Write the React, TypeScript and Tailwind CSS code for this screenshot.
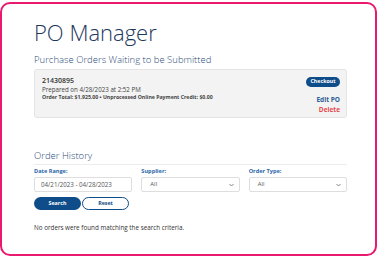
import React from "react";

const Chevron = () => (
  <svg width="5" height="4" viewBox="0 0 10 6" className="shrink-0">
    <path d="M1 1l4 4 4-4" fill="none" stroke="#666" strokeWidth="1.6" />
  </svg>
);

const SelectBox = ({ value }: { value: string }) => (
  <div className="flex h-[15px] w-full items-center justify-between rounded-[2px] border border-[#dedede] bg-white pl-[8px] pr-[5px] text-[6px] text-[#555]">
    <span>{value}</span>
    <Chevron />
  </div>
);

export default function App() {
  return (
    <div
      className="h-[257px] w-[379px] overflow-hidden bg-white"
      style={{ fontFamily: '"Open Sans", "Liberation Sans", sans-serif' }}
    >
      <div className="mt-[2px] h-[254px] w-[377px] rounded-[10px] border-2 border-[#e8196e]">
        <div className="w-[345px] pl-[32px] pt-[15px]">
          <h1 className="text-[22px] font-light leading-[27px] text-[#1c375c]">PO Manager</h1>

          <h2 className="mt-[7px] text-[9.5px] font-light leading-[13px] text-[#2c4c78]">
            Purchase Orders Waiting to be Submitted
          </h2>

          {/* waiting PO card */}
          <div className="mt-[3px] flex h-[49px] justify-between rounded-[3px] border border-[#e4e4e4] bg-[#f3f3f3] pl-[7px] pr-[6px]">
            <div className="pt-[6px] text-[#333]">
              <p className="text-[7px] font-semibold leading-[9.5px]">21430895</p>
              <p className="text-[6.2px] leading-[8px] text-[#444]">Prepared on 4/28/2023 at 2:52 PM</p>
              <p className="text-[5.2px] font-bold leading-[7px] text-[#444]">
                Order Total: $1,925.00 • Unprocessed Online Payment Credit: $0.00
              </p>
            </div>
            <div className="flex flex-col items-end pt-[7px]">
              <button className="flex h-[10px] w-[34px] items-center justify-center rounded-full bg-[#0f4c8a] text-[5.3px] font-bold text-white">
                Checkout
              </button>
              <p className="mt-[8px] text-[6.5px] font-bold leading-[10px] text-[#2b5d94]">Edit PO</p>
              <p className="text-[6.5px] font-bold leading-[10px] text-[#e5484d]">Delete</p>
            </div>
          </div>

          {/* order history */}
          <h2 className="mt-[31px] border-b border-[#ececec] pb-[2px] text-[9.5px] font-light leading-[13px] text-[#2c4c78]">
            Order History
          </h2>

          <div className="mt-[2px] grid grid-cols-3 gap-x-[9px]">
            <div>
              <p className="text-[5.6px] font-bold leading-[8px] text-[#2b66a8]">Date Range:</p>
              <div className="mt-[2px] flex h-[15px] items-center rounded-[2px] border border-[#dedede] bg-white pl-[6px] text-[6.2px] text-[#555]">
                04/21/2023 - 04/28/2023
              </div>
            </div>
            <div>
              <p className="text-[5.6px] font-bold leading-[8px] text-[#2b66a8]">Supplier:</p>
              <div className="mt-[2px]">
                <SelectBox value="All" />
              </div>
            </div>
            <div>
              <p className="text-[5.6px] font-bold leading-[8px] text-[#2b66a8]">Order Type:</p>
              <div className="mt-[2px]">
                <SelectBox value="All" />
              </div>
            </div>
          </div>

          <div className="mt-[5px] flex gap-[1px]">
            <button className="flex h-[13px] w-[47px] items-center justify-center rounded-full bg-[#0f4c8a] text-[5.3px] font-bold text-white">
              Search
            </button>
            <button className="flex h-[13px] w-[47px] items-center justify-center rounded-full border border-[#0f4c8a] bg-white text-[5.3px] font-bold text-[#0f4c8a]">
              Reset
            </button>
          </div>

          <p className="mt-[14px] text-[6.3px] leading-[8px] text-[#333]">
            No orders were found matching the search criteria.
          </p>
        </div>
      </div>
    </div>
  );
}
